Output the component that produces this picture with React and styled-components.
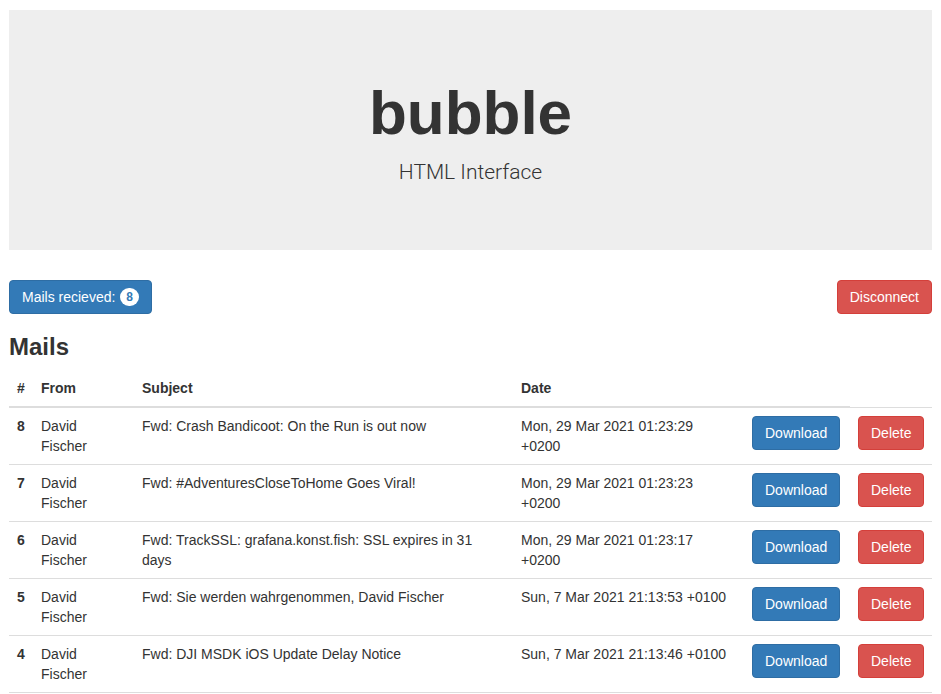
import React from 'react';
import styled, { createGlobalStyle } from 'styled-components';

const mails = [
  { id: 8, from: 'David Fischer', subject: 'Fwd: Crash Bandicoot: On the Run is out now', date: 'Mon, 29 Mar 2021 01:23:29 +0200' },
  { id: 7, from: 'David Fischer', subject: 'Fwd: #AdventuresCloseToHome Goes Viral!', date: 'Mon, 29 Mar 2021 01:23:23 +0200' },
  { id: 6, from: 'David Fischer', subject: 'Fwd: TrackSSL: grafana.konst.fish: SSL expires in 31 days', date: 'Mon, 29 Mar 2021 01:23:17 +0200' },
  { id: 5, from: 'David Fischer', subject: 'Fwd: Sie werden wahrgenommen, David Fischer', date: 'Sun, 7 Mar 2021 21:13:53 +0100' },
  { id: 4, from: 'David Fischer', subject: 'Fwd: DJI MSDK iOS Update Delay Notice', date: 'Sun, 7 Mar 2021 21:13:46 +0100' },
];

const GlobalStyle = createGlobalStyle`
  * { box-sizing: border-box; }
  body {
    margin: 0;
    background: #fff;
    color: #333;
    font-family: "Liberation Sans", Arial, sans-serif;
    font-size: 14px;
    line-height: 1.42857143;
  }
`;

const Page = styled.div`
  padding: 10px 9px 0;
`;

const Jumbotron = styled.div`
  padding: 48px 60px;
  margin-bottom: 30px;
  background-color: #eee;
  text-align: center;

  h1 {
    margin: 20px 0 10px;
    font-size: 62px;
    font-weight: 700;
    line-height: 69px;
    color: #333;
  }

  p {
    margin: 0 0 15px;
    font-family: Roboto, "Liberation Sans", sans-serif;
    font-size: 21px;
    font-weight: 300;
    line-height: 30px;
    color: #333;
  }
`;

const Toolbar = styled.div`
  display: flex;
  justify-content: space-between;
  align-items: center;
`;

const Button = styled.button`
  display: inline-block;
  padding: 6px 12px;
  font-family: inherit;
  font-size: 14px;
  line-height: 20px;
  color: #fff;
  background-color: ${p => (p.danger ? '#d9534f' : '#337ab7')};
  border: 1px solid ${p => (p.danger ? '#d43f3a' : '#2e6da4')};
  border-radius: 4px;
  white-space: nowrap;
  cursor: pointer;
`;

const Badge = styled.span`
  display: inline-block;
  min-width: 10px;
  margin-left: 1px;
  padding: 3px 6px;
  font-size: 12px;
  font-weight: 700;
  line-height: 1;
  color: #337ab7;
  background-color: #fff;
  border-radius: 10px;
  vertical-align: 1px;
`;

const Title = styled.h3`
  margin: 20px 0 10px;
  font-size: 24px;
  font-weight: 700;
  line-height: 26px;
`;

const Table = styled.table`
  width: 100%;
  border-collapse: collapse;
  border-spacing: 0;
  table-layout: fixed;
`;

const Th = styled.th`
  padding: 8px;
  text-align: left;
  vertical-align: bottom;
  font-weight: 700;
  line-height: 20px;
  border-bottom: 2px solid #ddd;
`;

const Td = styled.td`
  padding: 8px;
  vertical-align: top;
  line-height: 20px;
  border-top: 1px solid #ddd;
  font-weight: ${p => (p.bold ? 700 : 400)};
`;

const Row = styled.tr`
  &:last-child td { border-bottom: 1px solid #ddd; }
`;

export default function App() {
  return (
    <Page>
      <GlobalStyle />
      <Jumbotron>
        <h1>bubble</h1>
        <p>HTML Interface</p>
      </Jumbotron>
      <Toolbar>
        <Button>Mails recieved: <Badge>8</Badge></Button>
        <Button danger>Disconnect</Button>
      </Toolbar>
      <Title>Mails</Title>
      <Table>
        <colgroup>
          <col style={{ width: 24 }} />
          <col style={{ width: 101 }} />
          <col style={{ width: 379 }} />
          <col style={{ width: 231 }} />
          <col style={{ width: 106 }} />
          <col />
        </colgroup>
        <thead>
          <tr>
            <Th>#</Th>
            <Th>From</Th>
            <Th>Subject</Th>
            <Th>Date</Th>
            <Th></Th>
          </tr>
        </thead>
        <tbody>
          {mails.map(m => (
            <Row key={m.id}>
              <Td bold>{m.id}</Td>
              <Td>{m.from}</Td>
              <Td>{m.subject}</Td>
              <Td>{m.date}</Td>
              <Td><Button>Download</Button></Td>
              <Td><Button danger>Delete</Button></Td>
            </Row>
          ))}
        </tbody>
      </Table>
    </Page>
  );
}
